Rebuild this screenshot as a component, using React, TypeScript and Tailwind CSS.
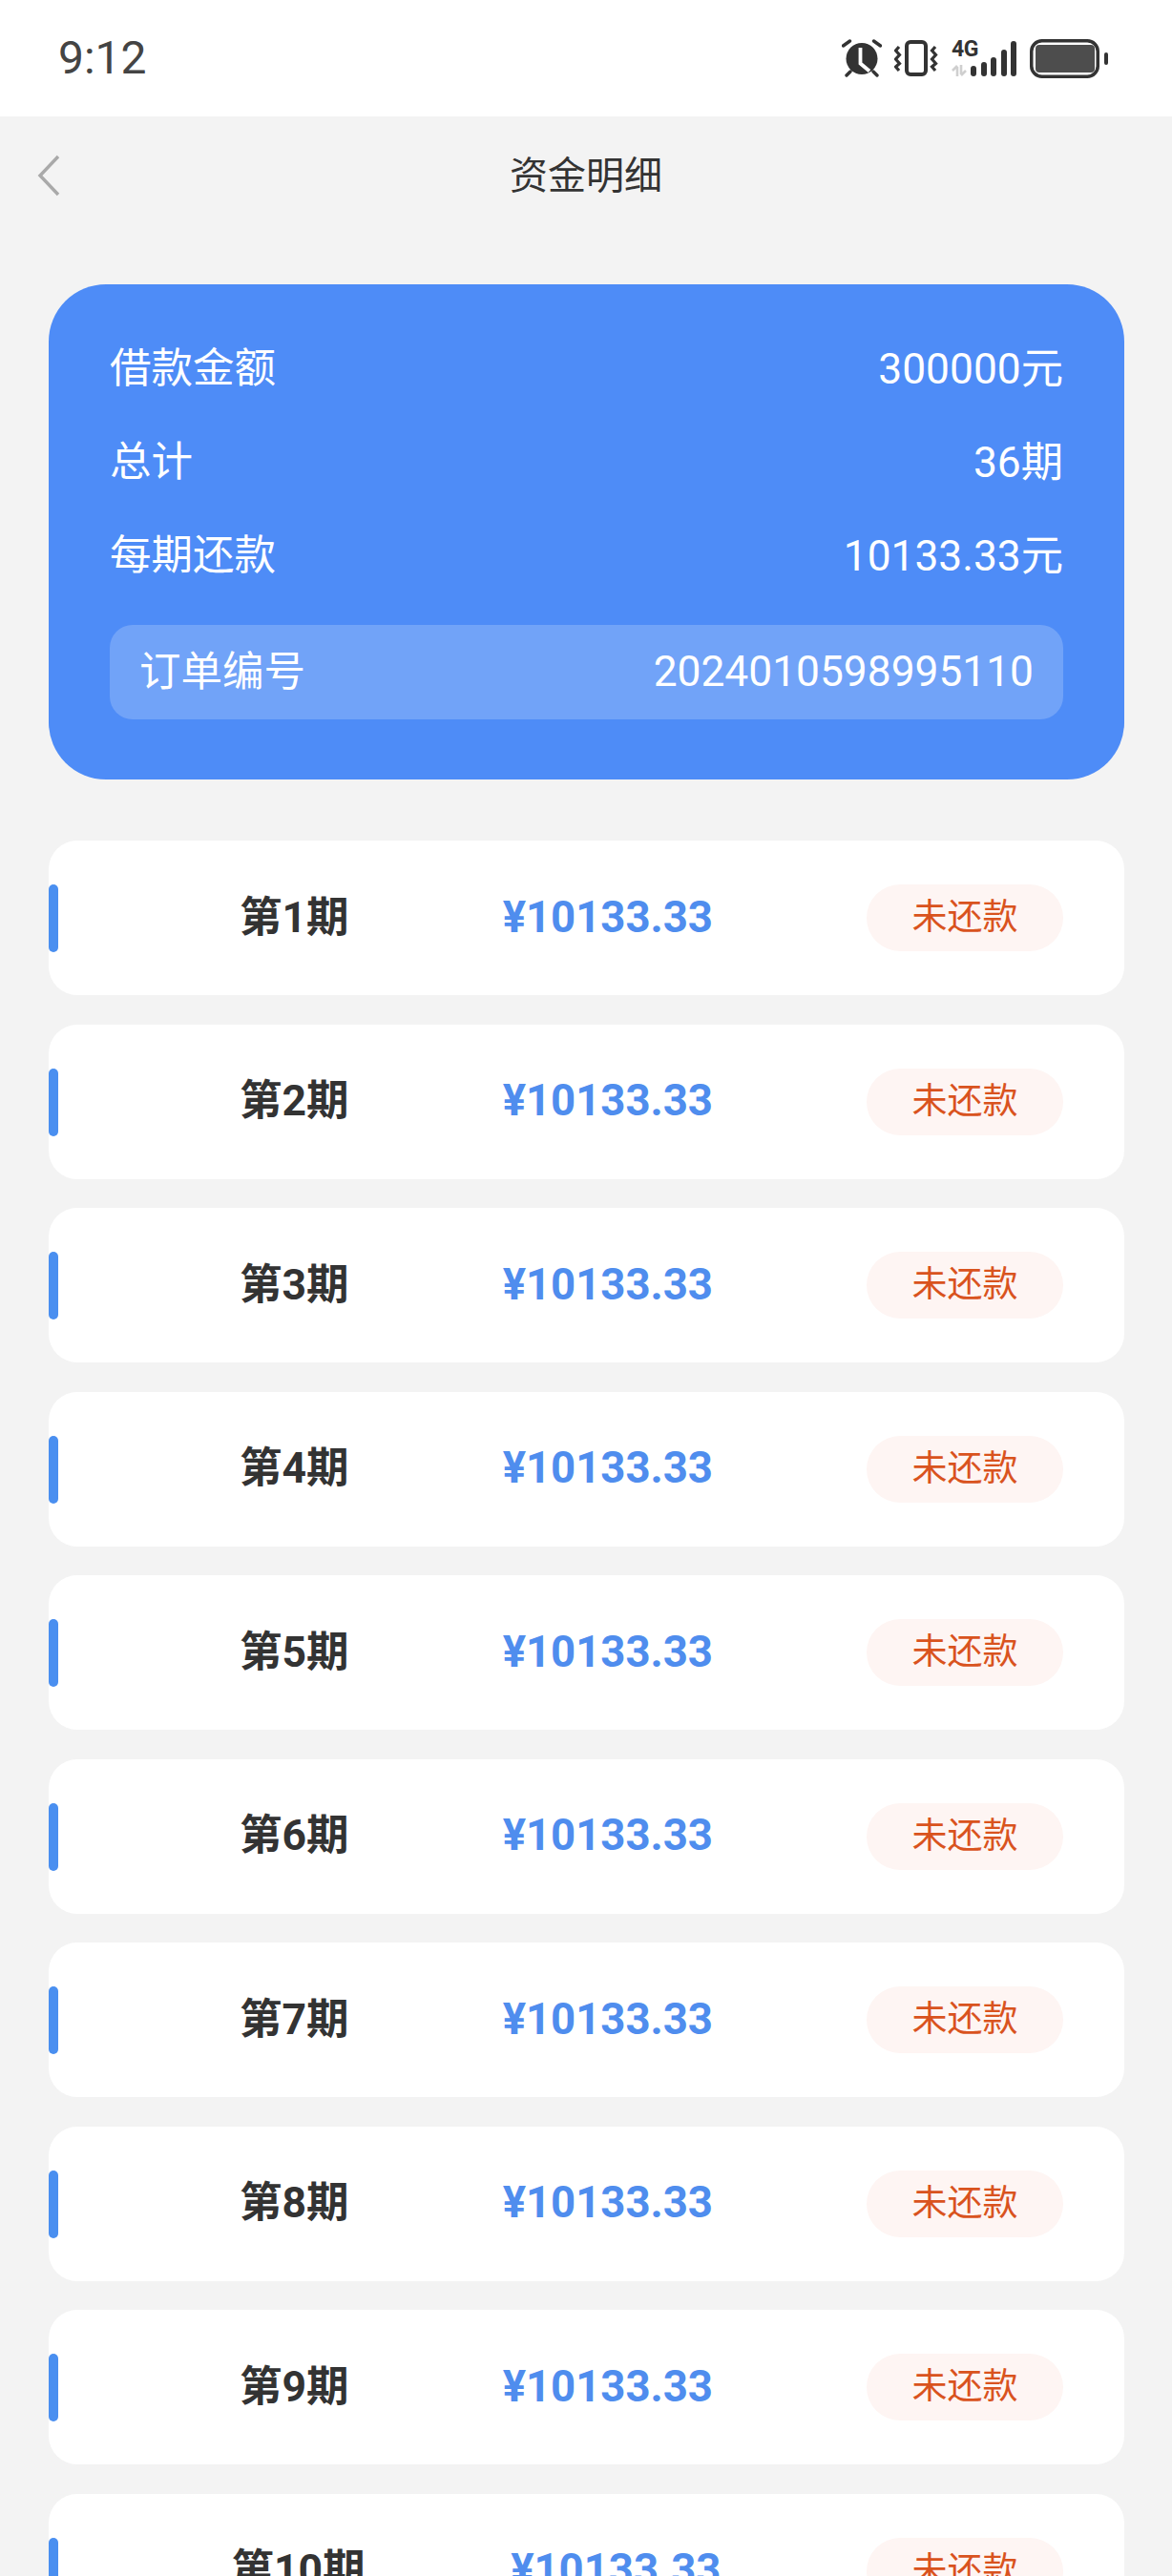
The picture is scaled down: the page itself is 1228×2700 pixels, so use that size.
const periods = [1, 2, 3, 4, 5, 6, 7, 8, 9, 10];

const summary = [
  { label: "借款金额", value: "300000元" },
  { label: "总计", value: "36期" },
  { label: "每期还款", value: "10133.33元" },
];

const signalBars = ["h-[11px]", "h-[15px]", "h-[20px]", "h-[28px]", "h-[37px]"];

const AlarmIcon = () => (
  <svg width="42" height="42" viewBox="0 0 42 42" className="text-[#333]">
    <circle cx="21" cy="21.5" r="16.5" fill="currentColor" />
    <path d="M19.5 10v16.5l9.5 8" fill="none" stroke="#fff" strokeWidth="3.8" />
    <path d="M1.5 8l7-5M40.5 8l-7-5M5 39l4-4M37 39l-4-4" stroke="currentColor" strokeWidth="3.4" strokeLinecap="round" />
  </svg>
);

const VibrateIcon = () => (
  <svg width="46" height="42" viewBox="0 0 46 42" fill="none" stroke="#333">
    <rect x="13" y="4" width="20" height="34" rx="4" strokeWidth="4" />
    <path d="M5 9L1.5 13 5.5 17.5 1.5 22 5.5 26.5 1.5 30 5 34" strokeWidth="3.2" />
    <path d="M43 9l-3.5 4 4 4.5-4 4.5 4 4.5-4 3.5 3.5 4" strokeWidth="3.2" />
  </svg>
);

const DataArrows = () => (
  <svg width="16" height="12" viewBox="0 0 16 12" fill="none" stroke="#cfcfcf" strokeWidth="2.6">
    <path d="M6 12V2M1 6l5-5" />
    <path d="M10 0v10M15 6l-5 5" />
  </svg>
);

const SignalIcon = () => (
  <div className="flex h-[37px] items-end gap-[4.5px]">
    {signalBars.map((height) => (
      <span key={height} className={`w-[6px] rounded-full bg-[#333] ${height}`} />
    ))}
  </div>
);

const BatteryIcon = () => (
  <svg width="82" height="41" viewBox="0 0 82 41">
    <rect x="1.75" y="1.75" width="69.5" height="37.5" rx="11" fill="none" stroke="#333" strokeWidth="3.5" />
    <rect x="6" y="6" width="62" height="29" rx="4" fill="#4d4d4d" />
    <rect x="78" y="14" width="4" height="13" rx="2" fill="#333" />
  </svg>
);

const BackIcon = () => (
  <svg width="24" height="44" viewBox="0 0 24 44" fill="none" className="shrink-0">
    <path d="M22 2L3 22l19 20" stroke="#a9a9a9" strokeWidth="3.4" />
  </svg>
);

const Row = ({ period }: { period: number }) => (
  <div className="relative flex h-[162px] items-center rounded-[30px] bg-white pl-[39px] pr-[64px]">
    <span className="absolute left-0 top-[46px] h-[71px] w-[10px] rounded-full bg-[#4a8ff0]" />
    <span className="ml-auto text-[44.5px] font-bold text-[#333]">第{period}期</span>
    <span className="ml-auto text-[45.5px] font-bold text-[#4f8dee]">¥10133.33</span>
    <span className="ml-auto flex h-[70px] w-[206px] items-center justify-center rounded-[35px] bg-[#fef5f3] text-[37px] text-[#d9531e]">
      未还款
    </span>
  </div>
);

export default function App() {
  return (
    <div className="h-[2700px] overflow-hidden bg-[#f3f3f3] font-['Roboto','Noto_Sans_CJK_SC',sans-serif]">
      <div className="flex h-[122px] items-center justify-between bg-white pl-[61px] pr-[67px]">
        <span className="text-[48px] leading-none text-[#444]">9:12</span>
        <div className="flex items-center">
          <AlarmIcon />
          <div className="ml-[13px]">
            <VibrateIcon />
          </div>
          <div className="relative ml-[14px] flex h-[37px] w-[68px] justify-end">
            <span className="absolute left-0 top-[-3px] text-[23px] font-bold leading-none tracking-[-0.5px] text-[#333]">4G</span>
            <span className="absolute bottom-0 left-0 flex">
              <DataArrows />
            </span>
            <SignalIcon />
          </div>
          <div className="ml-[14px]">
            <BatteryIcon />
          </div>
        </div>
      </div>

      <div className="relative flex h-[126px] items-center justify-center">
        <div className="absolute left-[39px] top-[40px]">
          <BackIcon />
        </div>
        <h1 className="text-[40px] font-normal text-[#333]">资金明细</h1>
      </div>

      <div className="ml-[51px] mr-[50px] mt-[50px] rounded-[60px] bg-[#4e8cf7] px-[64px] pb-[63px] pt-[40px] text-white">
        {summary.map((item) => (
          <div key={item.label} className="flex h-[98px] items-center justify-between">
            <span className="text-[43.5px]">{item.label}</span>
            <span className="text-[44.3px]">{item.value}</span>
          </div>
        ))}
        <div className="mt-[23px] flex h-[99px] items-center justify-between rounded-[24px] bg-white/20 px-[31px]">
          <span className="text-[43.5px]">订单编号</span>
          <span className="text-[44.3px]">2024010598995110</span>
        </div>
      </div>

      <div className="ml-[51px] mr-[50px] mt-[64px] flex flex-col gap-[30.5px]">
        {periods.map((p) => (
          <Row key={p} period={p} />
        ))}
      </div>
    </div>
  );
}
